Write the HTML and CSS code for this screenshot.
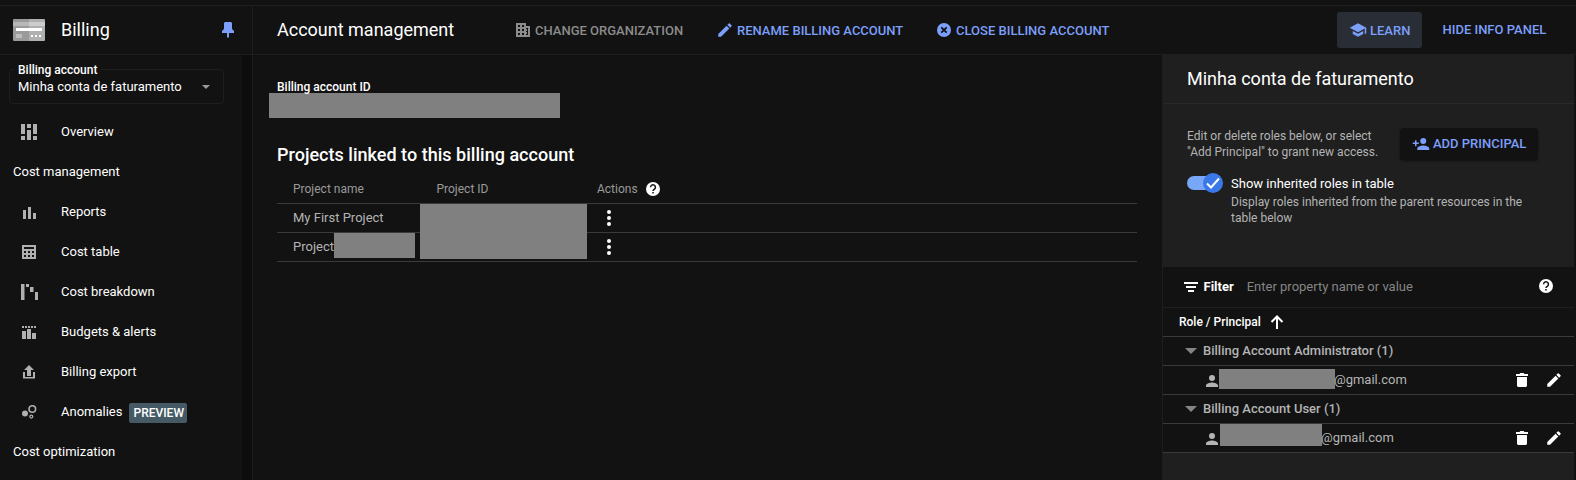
FILE: index.html
```html
<!DOCTYPE html>
<html lang="en">
<head>
<meta charset="utf-8">
<title>Account management</title>
<link rel="stylesheet" href="styles.css">
</head>
<body>
<svg class="defs" aria-hidden="true">
  <symbol id="pencil" viewBox="0 0 24 24"><path d="M3 17.25V21h3.75L17.81 9.94l-3.75-3.75L3 17.25zM20.71 7.04a1 1 0 0 0 0-1.41l-2.34-2.34a1 1 0 0 0-1.41 0l-1.83 1.83 3.75 3.75 1.83-1.83z"/></symbol>
  <symbol id="help" viewBox="0 0 18 18"><circle cx="9" cy="9" r="7"/><path class="cut" d="M6.6 7.3a2.4 2.4 0 1 1 3.7 2c-.8.5-1.3.9-1.3 1.7M9 12v1.5"/></symbol>
  <symbol id="trash" viewBox="0 0 18 18"><path d="M4 6v8.500c0 .8.700 1.500 1.500 1.500h7c.8 0 1.500-.7 1.500-1.500V6zM15 3h-3.500l-.8-1H7.300l-.8 1H3v2h12z"/></symbol>
  <symbol id="person" viewBox="0 0 24 24"><path d="M12 12a4 4 0 1 0 0-8 4 4 0 0 0 0 8zm0 2c-2.670 0-8 1.340-8 4v2h16v-2c0-2.660-5.330-4-8-4z"/></symbol>
  <symbol id="dots" viewBox="0 0 18 18"><circle cx="9" cy="3" r="2"/><circle cx="9" cy="9" r="2"/><circle cx="9" cy="15" r="2"/></symbol>
</svg>
<div class="app">
  <header class="topbar">
    <div class="product">
      <svg class="logo" viewBox="0 0 32 22"><path fill="#9a9a9a" d="M1 0h15v22H1a1 1 0 0 1-1-1V1a1 1 0 0 1 1-1z"/><path fill="#b0b0b0" d="M16 0h15a1 1 0 0 1 1 1v20a1 1 0 0 1-1 1H16z"/><path fill="#b8b8b8" d="M0 3h16v4H0z"/><path fill="#cdcdcd" d="M16 3h16v4H16z"/><path fill="#fff" d="M3 9h26v3H3zM18 16h2v2h-2zM22 16h2v2h-2zM26 16h2v2h-2z"/><path fill="#bdbdbd" d="M3 15h6v4H3z"/></svg>
      <span class="product-name">Billing</span>
      <svg class="pin" viewBox="0 0 12 16"><path d="M3 0h6l1 1v6l2 2v2H7v4l-1 1-1-1v-4H0V9l2-2V1z"/></svg>
    </div>
    <h1 class="page-title">Account management</h1>
    <nav class="actions">
      <a class="action action-org disabled"><svg class="icon" viewBox="0 0 18 18"><path fill-rule="evenodd" d="M2 2h10v3h4v11H2zM4 4v2h2V4zM8 4v2h2V4zM4 8v2h2V8zM8 8v2h2V8zM4 12v2h2v-2zM8 12v2h2v-2zM12 7v1h1v2h-1v1h1v2h-1v1h2V7z"/></svg><span>CHANGE ORGANIZATION</span></a>
      <a class="action action-rename"><svg class="icon"><use href="#pencil"/></svg><span>RENAME BILLING ACCOUNT</span></a>
      <a class="action action-close"><svg class="icon" viewBox="0 0 18 18"><circle cx="9" cy="9" r="7"/><path class="cross" d="M6.300 6.300l5.400 5.400M11.700 6.300l-5.400 5.400"/></svg><span>CLOSE BILLING ACCOUNT</span></a>
    </nav>
    <a class="learn"><svg class="icon" viewBox="0 0 24 24"><path d="M5 13.180v4L12 21l7-3.820v-4L12 17l-7-3.820zM12 3L1 9l11 6 9-4.910V17h2V9L12 3z"/></svg><span>LEARN</span></a>
    <a class="hide-panel">HIDE INFO PANEL</a>
  </header>
  <div class="body">
    <aside class="sidebar">
      <div class="sidebar-content">
        <div class="select"><span class="select-label">Billing account</span><span class="select-value">Minha conta de faturamento</span><i class="caret"></i></div>
        <ul class="menu">
          <li><svg class="icon" viewBox="0 0 18 18"><path d="M1 1h4v10H1zM1 13h4v4H1zM7 1h4v4H7zM7 7h4v10H7zM13 1h4v10h-4zM13 13h4v4h-4z"/></svg><span>Overview</span></li>
          <li class="section"><span>Cost management</span></li>
          <li><svg class="icon" viewBox="0 0 18 18"><path d="M3 7h3v9H3zM8 4h3v12H8zM13 10h3v6h-3z"/></svg><span>Reports</span></li>
          <li><svg class="icon" viewBox="0 0 18 18"><path fill-rule="evenodd" d="M2 2h14v14H2zM4 4v2h10V4zM4 8v2h2V8zM8 8v2h2V8zM12 8v2h2V8zM4 12v2h2v-2zM8 12v2h2v-2zM12 12v2h2v-2z"/></svg><span>Cost table</span></li>
          <li><svg class="icon" viewBox="0 0 18 18"><path d="M1 1h3.500v16H1zM6 1h3v3H6zM10 4h3.500v5H10zM15 9h3v8h-3z"/></svg><span>Cost breakdown</span></li>
          <li><svg class="icon" viewBox="0 0 18 18"><path d="M2 3h2v2H2zM5 3h2v2H5zM8 3h2v2H8zM11 3h2v2h-2zM14 3h2v2h-2zM2 8h4v8H2zM7 6h4v10H7zM12 10h4v6h-4z"/></svg><span>Budgets &amp; alerts</span></li>
          <li><svg class="icon" viewBox="0 0 18 18"><path d="M9 2l5 5h-3v6H7V7H4zM3 9h2v5h8V9h2v6.500H3z"/></svg><span>Billing export</span></li>
          <li><svg class="icon" viewBox="0 0 18 18"><circle cx="5" cy="10.500" r="3"/><circle class="ring" cx="12.300" cy="6" r="3.300"/><circle class="ring thin" cx="11.300" cy="13.600" r="1.500"/></svg><span>Anomalies</span><b class="badge">PREVIEW</b></li>
          <li class="section"><span>Cost optimization</span></li>
        </ul>
      </div>
      <div class="scroll-track"></div>
    </aside>
    <main class="main">
      <div class="field-label">Billing account ID</div>
      <div class="redacted account-id"></div>
      <h2 class="projects-title">Projects linked to this billing account</h2>
      <div class="projects">
        <div class="prow phead"><span>Project name</span><span>Project ID</span><span class="help-cell">Actions<svg class="icon"><use href="#help"/></svg></span></div>
        <div class="prow"><span>My First Project</span><span class="id-cell"><i class="redacted project-ids"></i></span><svg class="icon"><use href="#dots"/></svg></div>
        <div class="prow"><span class="name-cell">Project<i class="redacted project-name"></i></span><span></span><svg class="icon"><use href="#dots"/></svg></div>
      </div>
    </main>
    <section class="panel">
      <h2 class="panel-title">Minha conta de faturamento</h2>
      <div class="panel-info">
        <div class="intro">
          <p>Edit or delete roles below, or select<br>"Add Principal" to grant new access.</p>
          <a class="add"><svg class="icon" viewBox="0 0 24 24"><path d="M15 12a4 4 0 1 0 0-8 4 4 0 0 0 0 8zM6 10V7H4v3H1v2h3v3h2v-3h3v-2H6zm9 4c-2.670 0-8 1.340-8 4v2h16v-2c0-2.660-5.330-4-8-4z"/></svg>ADD PRINCIPAL</a>
        </div>
        <div class="inherit">
          <div class="toggle"><div class="thumb"><svg viewBox="0 0 20 20"><path d="M4 10.500l4 4 8-9"/></svg></div></div>
          <div><div class="inherit-title">Show inherited roles in table</div><p class="inherit-text">Display roles inherited from the parent resources in the<br>table below</p></div>
        </div>
      </div>
      <div class="filter"><svg class="icon" viewBox="0 0 18 18"><path d="M2 4h14v2H2zM4 8h10v2H4zM6 12h6v2H6z"/></svg><b>Filter</b><span>Enter property name or value</span><svg class="icon help"><use href="#help"/></svg></div>
      <div class="rrow rhead"><span>Role / Principal</span><svg class="arrow" viewBox="0 0 14 14"><path d="M7 14V2M1.500 7L7 1.500 12.500 7"/></svg></div>
      <div class="rrow group"><i class="triangle"></i><span>Billing Account Administrator (1)</span></div>
      <div class="rrow member"><svg class="icon"><use href="#person"/></svg><i class="redacted mail-a"></i><span>@gmail.com</span><svg class="icon del"><use href="#trash"/></svg><svg class="icon edit"><use href="#pencil"/></svg></div>
      <div class="rrow group"><i class="triangle"></i><span>Billing Account User (1)</span></div>
      <div class="rrow member"><svg class="icon"><use href="#person"/></svg><i class="redacted mail-b"></i><span>@gmail.com</span><svg class="icon del"><use href="#trash"/></svg><svg class="icon edit"><use href="#pencil"/></svg></div>
    </section>
  </div>
</div>
</body>
</html>
```
FILE: styles.css
```css
* { box-sizing: border-box; }
body { margin: 0; background: #121212; color: #fff; font: 400 13px/16px Roboto, sans-serif; white-space: nowrap; overflow: hidden; }
h1, h2, p, ul { margin: 0; padding: 0; }
.defs { display: none; }
.icon { width: 18px; height: 18px; flex: none; fill: currentColor; }
.cut { fill: none; stroke: #121212; stroke-width: 1.5; }
.redacted { display: block; flex: none; background: #808080; }

.app { height: 480px; padding-top: 5px; display: flex; flex-direction: column; }
.topbar { height: 50px; flex: none; display: flex; align-items: center; border-top: 1px solid #1e1e1e; border-bottom: 1px solid #1e1e1e; }
.product { width: 253px; height: 48px; display: flex; align-items: center; padding-left: 13px; border-right: 1px solid #1e1e1e; }
.logo { width: 32px; height: 22px; }
.product-name { margin-left: 16px; font-size: 18px; line-height: 24px; width: 161px; }
.pin { width: 12px; height: 16px; fill: #7c9ffb; margin-bottom: 1px; }
.page-title { margin-left: 24px; width: 237px; font-size: 18px; line-height: 24px; font-weight: 400; }
.actions { display: flex; flex: 1; }
.action, .learn, .hide-panel, .add { display: flex; align-items: center; color: #7c9ffb; font-weight: 500; }
.action span, .learn span { padding-top: 2px; }
.action .icon, .learn .icon, .add .icon { margin-right: 3px; }
.action-org { width: 202px; }
.action-rename { width: 219px; }
.disabled { color: #8c8c8c; }
.cross { stroke: #121212; stroke-width: 1.8; }
.learn { width: 85px; height: 36px; padding-left: 12px; background: #292d36; border-radius: 3px; }
.hide-panel { width: 154px; padding-left: 20.500px; }

.body { flex: 1; min-height: 0; display: flex; }
.sidebar { width: 253px; display: flex; border-right: 1px solid #1e1e1e; }
.sidebar-content { width: 242px; padding: 14px 18px 0 9px; }
.scroll-track { flex: 1; background: #0d0d0d; }
.select { position: relative; height: 35px; display: flex; align-items: center; padding: 0 13px 0 8px; border: 1px solid #1e1e1e; border-radius: 4px; justify-content: space-between; width: 215px; }
.select-label { position: absolute; left: 4px; top: -8px; padding: 0 4px; font-size: 12px; font-weight: 500; background: #121212; }
.caret { border: 4px solid transparent; border-top-color: #9a9a9a; border-bottom: 0; }
.menu { list-style: none; margin-top: 8px; }
.menu li { height: 40px; display: flex; align-items: center; padding-left: 11px; }
.menu .icon { margin-right: 23px; color: #b0b0b0; }
.menu .section { padding-left: 4px; }
.ring { fill: none; stroke: currentColor; stroke-width: 1.6; }
.thin { stroke-width: 1.2; }
.badge { margin: 2px 0 0 7px; width: 58px; height: 20px; padding-left: 4px; line-height: 20px; font-size: 12px; font-weight: 500; background: #455a64; border-radius: 2px; }

.main { width: 909px; padding: 24px 25px 0 24px; }
.field-label { font-size: 12px; font-weight: 500; height: 14px; }
.account-id { width: 291px; height: 25px; margin-left: -8px; }
.projects-title { font-size: 18px; line-height: 24px; font-weight: 500; margin-top: 25px; letter-spacing: 0.02px; }
.projects { margin-top: 8px; color: #b4b4b4; }
.prow { height: 29px; display: grid; grid-template-columns: 143.500px 160.500px 1fr; align-items: center; padding-left: 16px; border-bottom: 1px solid #3a3a3a; }
.phead { font-size: 12px; color: #9a9a9a; }
.help-cell, .name-cell { display: flex; align-items: center; }
.help-cell .icon { margin: 0 0 1px 6px; color: #fff; }
.prow > .icon { margin-left: 3px; color: #fff; }
.id-cell { position: relative; align-self: start; }
.project-ids { position: absolute; left: -16.500px; top: 0; width: 167px; height: 55px; }
.project-name { width: 81px; height: 25px; margin-top: -3px; }

.panel { width: 412px; background: #1f1f1f; border-left: 1px solid #1e1e1e; }
.panel-title { height: 49px; padding-left: 24px; line-height: 47px; font-size: 18px; font-weight: 400; border-bottom: 1px solid #292929; }
.panel-info { height: 163px; padding: 24px 36px 0 24px; font-size: 12px; color: #b4b4b4; }
.intro { display: flex; justify-content: space-between; height: 48px; }
.add { width: 138px; height: 32px; padding-left: 12px; font-size: 13px; background: #121212; border-radius: 4px; box-shadow: 0 1px 2px #111; }
.inherit { display: flex; gap: 14px; }
.toggle { width: 30px; height: 14px; background: #78a7f8; border-radius: 7px; }
.thumb { width: 20px; height: 20px; margin: -3px 0 0 16px; border-radius: 50%; background: #3b78e7; }
.thumb svg { display: block; fill: none; stroke: #fff; stroke-width: 2; }
.inherit-title { color: #fff; font-size: 13px; margin-bottom: 2px; }
.filter { height: 41px; display: flex; align-items: center; padding: 0 19px 0 19px; background: #121212; border-bottom: 1px solid #1e1e1e; }
.filter b { font-weight: 700; margin: 0 13px 0 3.500px; }
.filter span { color: #858585; }
.filter .help { margin: 0 0 2px auto; }
.rrow { height: 29px; display: flex; align-items: center; background: #121212; border-bottom: 1px solid #3a3a3a; color: #b4b4b4; }
.rhead { padding-left: 16px; color: #fff; font-size: 12px; font-weight: 500; }
.arrow { width: 14px; height: 14px; margin-left: 9px; fill: none; stroke: #fff; stroke-width: 2; }
.group { padding-left: 22px; font-weight: 500; }
.triangle { border: 6px solid transparent; border-top-color: #858585; border-bottom: 0; margin-right: 6px; }
.member { padding: 0 11px 0 40px; }
.member > .icon:first-child { margin-top: 2px; }
.mail-a { width: 116px; height: 20px; margin: -3px -1px 0 -2px; }
.mail-b { width: 102px; height: 22px; margin: -6px -1px 0 -1px; }
.member .del { margin: 0 14px 0 auto; color: #fff; }
.member .edit { color: #fff; }
```
